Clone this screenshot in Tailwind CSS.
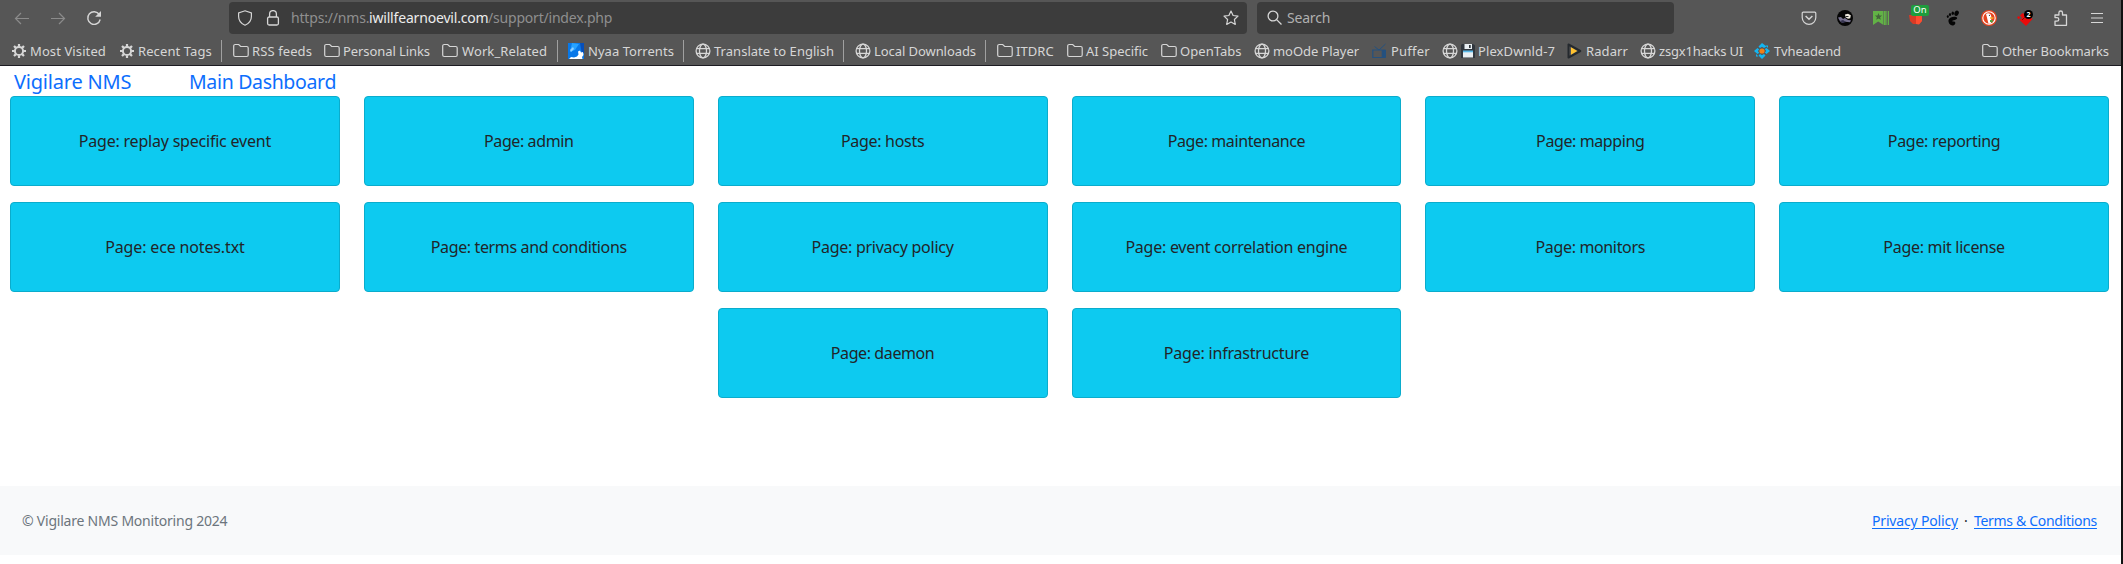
<!DOCTYPE html>
<html lang="en">
<head>
<meta charset="utf-8">
<title>Vigilare NMS</title>
<script src="https://cdn.jsdelivr.net/npm/@tailwindcss/browser@4"></script>
</head>
<body class="h-[564px] w-[2123px] overflow-hidden bg-white font-['Noto_Sans',sans-serif]">
<svg class="hidden" xmlns="http://www.w3.org/2000/svg">
  <symbol id="gear" viewBox="0 0 16 16"><g stroke="currentColor" fill="none"><circle cx="8" cy="8" r="4.1" stroke-width="2"/><path stroke-width="2.2" d="M8 1v2.6M8 12.4V15M1 8h2.6M12.4 8H15M3 3l1.9 1.9M11.1 11.1L13 13M3 13l1.9-1.9M11.1 4.900L13 3"/></g></symbol>
  <symbol id="folder" viewBox="0 0 16 16"><path fill="none" stroke="currentColor" stroke-width="1.2" d="M2.200 1.500h3.500l2 2h6a1.500 1.500 0 0 1 1.500 1.500v7a1.500 1.500 0 0 1-1.500 1.500H2.200A1.500 1.500 0 0 1 .7 12V3a1.500 1.500 0 0 1 1.500-1.500z"/></symbol>
  <symbol id="globe" viewBox="0 0 16 16"><g fill="none" stroke="currentColor" stroke-width="1.300"><circle cx="8" cy="8" r="6.900"/><ellipse cx="8" cy="8" rx="3.500" ry="6.900"/><path d="M1.500 5.700h13M1.500 10.300h13"/></g></symbol>
</svg>

<div class="flex">
<div class="w-[2121px]">
  <header class="h-[66px] border-b border-[#1c1b22] bg-[#565656] text-[#d6d6d6]">
    <div class="flex h-[34px] items-center pt-px">
      <div class="flex w-[229px] items-center gap-5 pl-[14px]">
        <svg class="size-4 text-[#8b8b8b]" viewBox="0 0 16 16" fill="none" stroke="currentColor" stroke-width="1.200"><path d="M15 8.500H1.500M7 3L1.500 8.500 7 14"/></svg>
        <svg class="size-4 text-[#8b8b8b]" viewBox="0 0 16 16" fill="none" stroke="currentColor" stroke-width="1.200"><path d="M1 8.500h13.500M9 3l5.500 5.500L9 14"/></svg>
        <svg class="size-4" viewBox="0 0 16 16"><path fill="none" stroke="currentColor" stroke-width="1.400" d="M13.300 4.500A6.300 6.300 0 1 0 14.200 9.500"/><path fill="currentColor" d="M15 1v5.800H9.200z"/></svg>
      </div>
      <div class="flex h-8 w-[1018px] items-center rounded bg-[#3c3c3c] pl-2 pr-2 text-[14px]">
        <svg class="size-4" viewBox="0 0 16 16" fill="none" stroke="currentColor" stroke-width="1.200"><path d="M8 .8l6.400 2.100v3.600c0 4-2.600 7.100-6.400 8.700C4.200 13.600 1.600 10.500 1.600 6.500V2.900z"/></svg>
        <svg class="ml-3 size-4" viewBox="0 0 16 16" fill="none" stroke="currentColor" stroke-width="1.300"><rect x="2.600" y="7" width="10.800" height="8" rx="1.500"/><path d="M4.600 7V4a3.400 3.400 0 0 1 6.800 0v3"/></svg>
        <div class="ml-[10px] flex whitespace-pre pt-px leading-5 text-[#8f8f8f]"><span class="w-[78px] tracking-[-0.18px]">https://nms.</span><span class="w-[119px] tracking-[-0.18px] text-[#ececec]">iwillfearnoevil.com</span><span class="tracking-[-0.2px]">/support/index.php</span></div>
        <svg class="ml-auto size-4" viewBox="0 0 16 16" fill="none" stroke="currentColor" stroke-width="1.200" stroke-linejoin="round"><path d="M8 1l2.100 4.500 4.900.6-3.600 3.400.9 4.900L8 12l-4.300 2.400.9-4.900L1 6.100l4.900-.6z"/></svg>
      </div>
      <div class="ml-[10px] flex h-8 w-[417px] items-center rounded bg-[#3c3c3c] pl-[10px] text-[14px]">
        <svg class="size-4" viewBox="0 0 16 16" fill="none" stroke="currentColor" stroke-width="1.300"><circle cx="6" cy="6" r="4.900"/><path d="M9.600 9.600L14.500 14.500"/></svg>
        <span class="ml-1 pt-px leading-5 tracking-[-0.2px] text-[#b0b0b0]">Search</span>
      </div>
      <div class="ml-[127px] flex items-center gap-5">
        <svg class="size-4" viewBox="0 0 16 16" fill="none" stroke="currentColor" stroke-width="1.200"><path d="M2.200 2.200h11.600a1 1 0 0 1 1 1V7.500a6.800 6.800 0 0 1-13.600 0V3.200a1 1 0 0 1 1-1z"/><path stroke-width="1.500" d="M4.600 6L8 9.200 11.400 6"/></svg>
        <svg class="size-4" viewBox="0 0 16 16"><circle cx="8" cy="8" r="8" fill="#050505"/><path fill="#77728f" d="M1 7.500l3-.5 2 2 2-1 3 2 3 .2-1 2-5-.5-3 1-2-1.500z"/><path fill="#35334e" d="M3 11l3-1 3 2-3 1z"/><path fill="#eeeade" d="M8 4.500l3-.8 2.800 1.500-.5 3-2.300.5-2.500-1.500z"/><path fill="#292929" d="M8.500 6h3v1h-3z"/></svg>
        <svg class="size-4" viewBox="0 0 16 16"><path fill="#62b246" d="M0 1h10.500v14L5.200 11.500 0 15z"/><path fill="#62b246" d="M11 1h1.800v14H11zM13.400 1h.8v14h-.8zM14.900 1h1.100v14h-1.100z"/><path fill="#44643a" d="M5.500 3l1 2.400 2.600.2-2 1.700.7 2.500-2.300-1.400-2.300 1.400.7-2.500-2-1.700 2.600-.2z"/></svg>
        <div class="relative size-4">
          <svg class="size-4" viewBox="0 0 16 16"><path fill="#d93a25" d="M0 5h13v6l-3 3H4l-3-3z"/><path fill="#ff4d30" d="M7 5h6v6l-3 3.500L7 14z"/></svg>
          <span class="absolute left-0.5 -top-[5px] flex h-[11px] w-[18px] items-center justify-center rounded-[2px] bg-[#1f9d3d] text-[9.500px] leading-none text-white">On</span>
        </div>
        <svg class="size-4" viewBox="0 0 16 16" fill="#050505"><ellipse cx="11.600" cy="3.200" rx="2.100" ry="2.800" transform="rotate(25 11.600 3.200)"/><ellipse cx="7.800" cy="3.300" rx="1.200" ry="1.800"/><ellipse cx="5" cy="4.600" rx="1.100" ry="1.500"/><ellipse cx="2.800" cy="6.600" rx="1" ry="1.300"/><path d="M12 7.600C10.500 6 4.500 6.800 3.600 9.800 2.800 12.800 5.400 15.800 8 15.400c2.500-.4 2.900-2.900 1.600-3.700-.8-.5-1.500 0-2.300-.4-.5-1 5.900-1 4.700-3.700z"/></svg>
        <svg class="size-4" viewBox="0 0 16 16"><circle cx="8" cy="8" r="8" fill="#e5431f"/><circle cx="8" cy="8" r="6.200" fill="#e5431f" stroke="#fff" stroke-width="1.100"/><path fill="#fff" d="M5 4c2-1.500 5-.5 5.300 2.500L10 13.500l-2.500.3L5.800 7z"/><path fill="#f5b52b" d="M9 7.200l4 .2-1 1.400H9z"/><path fill="#48a942" d="M9 10l3 .2-.5 2.300L9 12z"/><circle cx="8.500" cy="5.300" r=".6" fill="#234"/></svg>
        <div class="relative size-4">
          <svg class="size-4" viewBox="0 0 16 16"><path fill="#ea0b0b" d="M8.500 1.500L15.500 9 9 16 2.500 10 5 8l-2-2.500L5.500 3 7 4z"/><path fill="#ea0b0b" d="M0 7.500L1.700 6l1.600 1.500-1.600 1.700z"/><path stroke="#7b1111" d="M5 10l3-3"/></svg>
          <span class="absolute left-[7px] top-0 flex size-[9px] items-center justify-center rounded-full bg-black text-[7px] font-bold leading-none text-white">2</span>
        </div>
        <svg class="size-4" viewBox="0 0 16 16" fill="none" stroke="currentColor" stroke-width="1.300" stroke-linejoin="round"><path d="M2 15.300V11.200h2a1.700 1.700 0 0 0 0-3.600H2V5h3.900V2.800a1.800 1.800 0 0 1 3.600 0V5h4v10.300z"/></svg>
        <svg class="size-4" viewBox="0 0 16 16" stroke="currentColor" stroke-width="1.200"><path d="M2 3.500h12M2 8h12M2 12.500h12"/></svg>
      </div>
    </div>

    <nav class="flex h-[31px] items-center whitespace-pre pl-[11px] pt-[3px] text-[13px] leading-4">
      <svg class="size-4"><use href="#gear"/></svg><span class="ml-[3px] w-[89px] tracking-[0.1px]">Most Visited</span>
      <svg class="size-4"><use href="#gear"/></svg><span class="ml-[3px] w-[83px] tracking-[0.1px]">Recent Tags</span>
      <i class="h-[22px] w-px bg-[#a0a0a0]"></i>
      <svg class="ml-[11px] size-4"><use href="#folder"/></svg><span class="ml-[3px] w-[72px] tracking-[0.1px]">RSS feeds</span>
      <svg class="size-4"><use href="#folder"/></svg><span class="ml-[3px] w-[99px] tracking-[-0.08px]">Personal Links</span>
      <svg class="size-4"><use href="#folder"/></svg><span class="ml-1 w-[95px] tracking-[0.1px]">Work_Related</span>
      <i class="h-[22px] w-px bg-[#a0a0a0]"></i>
      <svg class="ml-[10px] size-4" viewBox="0 0 16 16"><path fill="#0878e8" d="M0 0h16v16H0z"/><path fill="#27a3ff" d="M4 0l7 1-4 6-5 2z"/><path fill="#064fba" d="M12 0h4v10h-2l-1-4z"/><path fill="#fff" d="M1 16l2-2 3 .5 3-1 1.500-2-.5-3 2-1 1 2 2-.5.5 3-1.500 2 .5 2z"/><path fill="#8fcfff" d="M2 7l3-3 1 2-3 3z"/></svg><span class="ml-[4px] w-[95px] tracking-[0.04px]">Nyaa Torrents</span>
      <i class="h-[22px] w-px bg-[#a0a0a0]"></i>
      <svg class="ml-[11px] size-4"><use href="#globe"/></svg><span class="ml-[3px] w-[129px] tracking-[0.03px]">Translate to English</span>
      <i class="h-[22px] w-px bg-[#a0a0a0]"></i>
      <svg class="ml-[11px] size-4"><use href="#globe"/></svg><span class="ml-[3px] w-[111px] tracking-[-0.07px]">Local Downloads</span>
      <i class="h-[22px] w-px bg-[#a0a0a0]"></i>
      <svg class="ml-[11px] size-4"><use href="#folder"/></svg><span class="ml-[3px] w-[51px] tracking-[0.05px]">ITDRC</span>
      <svg class="size-4"><use href="#folder"/></svg><span class="ml-[3px] w-[75px] tracking-[-0.02px]">AI Specific</span>
      <svg class="size-4"><use href="#folder"/></svg><span class="ml-[3px] w-[74px] tracking-[0.05px]">OpenTabs</span>
      <svg class="size-4"><use href="#globe"/></svg><span class="ml-[3px] w-[99px] tracking-[-0.06px]">moOde Player</span>
      <svg class="size-4" viewBox="0 0 16 16" fill="none" stroke="#24517f"><path stroke-width="1.200" d="M.8 7h9.500v7.500H.8z"/><path fill="#24517f" d="M11 7h2.500v7.500H11z"/><path d="M2.500 3.500L7 7l6.500-6"/></svg><span class="ml-[3px] w-[51px] tracking-[0.2px]">Puffer</span>
      <svg class="size-4"><use href="#globe"/></svg>
      <svg class="ml-[3px] size-[14px]" viewBox="0 0 14 14"><path fill="#30363d" d="M1 0h11l2 1.500V14H0V1z"/><path fill="#e8eef2" d="M3.500 0h7.500v5H3.500zM2 7h10v6.500H2z"/><path fill="#30363d" d="M8 1h1.700v3H8z"/><path fill="#59b8e8" d="M2 6.500h10v1.800H2z"/></svg>
      <span class="ml-[3px] w-[89px] tracking-[0.1px]">PlexDwnld-7</span>
      <svg class="size-4" viewBox="0 0 16 16"><path fill="none" stroke="#24292e" stroke-width="2" stroke-linejoin="round" d="M1.500 1.500v13L13.300 8z"/><path fill="#ffc230" d="M4 4.200v7.600L10.300 8z"/></svg><span class="ml-[3px] w-[54px] tracking-[0.1px]">Radarr</span>
      <svg class="size-4"><use href="#globe"/></svg><span class="ml-[3px] w-[95px] tracking-[-0.2px]">zsgx1hacks UI</span>
      <svg class="size-4" viewBox="0 0 16 16"><path fill="#12b6f2" d="M8 0l4.500 3.500L10 5 8 3.800 6 5 4.500 3.500zM16 8l-3.500 3-1.700-1.500L12.200 8l-1.400-2L12.500 5zM8 16l-3.500-3.500L6 11l2 1.200L10 11l1.500 1.500zM0 8l3.500-3 1.700 1.500L3.800 8l1.400 1.800L3.500 11z"/><path fill="#12b6f2" d="M11.500 2.500H14V5zM2 11v2.500h2.500z"/><circle cx="8" cy="8" r="2.600" fill="#f08018"/></svg><span class="ml-[4px] tracking-[-0.06px]">Tvheadend</span>
      <svg class="ml-auto size-4"><use href="#folder"/></svg><span class="ml-[4px] w-[119px] tracking-[-0.07px]">Other Bookmarks</span>
    </nav>
  </header>

  <main class="h-[420px]">
    <div class="flex h-[30px] items-center pl-[14px] pt-px text-[20px] leading-7 text-[#0d6efd]"><a class="w-[175px] tracking-[-0.2px]">Vigilare NMS</a><a class="text-[19.500px] tracking-[-0.33px]">Main Dashboard</a></div>
    <div class="ml-[10px] grid w-[2099px] auto-rows-[90px] grid-cols-6 gap-x-6 gap-y-4 text-base text-[#212529] *:flex *:items-center *:justify-center *:rounded *:border *:border-[#0baccc] *:bg-[#0dcaf0]">
      <div class="tracking-[-0.21px]">Page: replay specific event</div>
      <div class="tracking-[-0.4px]">Page: admin</div>
      <div class="tracking-[-0.3px]">Page: hosts</div>
      <div class="tracking-[-0.4px]">Page: maintenance</div>
      <div class="tracking-[-0.4px]">Page: mapping</div>
      <div class="tracking-[-0.3px]">Page: reporting</div>
      <div class="tracking-[-0.15px]">Page: ece notes.txt</div>
      <div class="tracking-[-0.36px]">Page: terms and conditions</div>
      <div class="tracking-[-0.26px]">Page: privacy policy</div>
      <div class="tracking-[-0.25px]">Page: event correlation engine</div>
      <div class="tracking-[-0.35px]">Page: monitors</div>
      <div class="tracking-[-0.3px]">Page: mit license</div>
      <div class="col-start-3 tracking-[-0.4px]">Page: daemon</div>
      <div class="tracking-[-0.21px]">Page: infrastructure</div>
    </div>
  </main>

  <footer class="flex h-[69px] items-center justify-between bg-[#f8f9fa] pl-[22px] pr-6 text-[14px] leading-[21px]">
    <span class="tracking-[-0.22px] text-[#6c757d]">© Vigilare NMS Monitoring 2024</span>
    <div class="flex text-[#212529]"><a class="w-[86px] tracking-[-0.17px] text-[#0d6efd] underline underline-offset-2">Privacy Policy</a><span class="w-4 text-center">·</span><a class="w-[123px] whitespace-nowrap tracking-[-0.31px] text-[#0d6efd] underline underline-offset-2">Terms &amp; Conditions</a></div>
  </footer>
</div>
<div class="h-[564px] w-0.5 bg-[#111]"></div>
</div>
</body>
</html>
